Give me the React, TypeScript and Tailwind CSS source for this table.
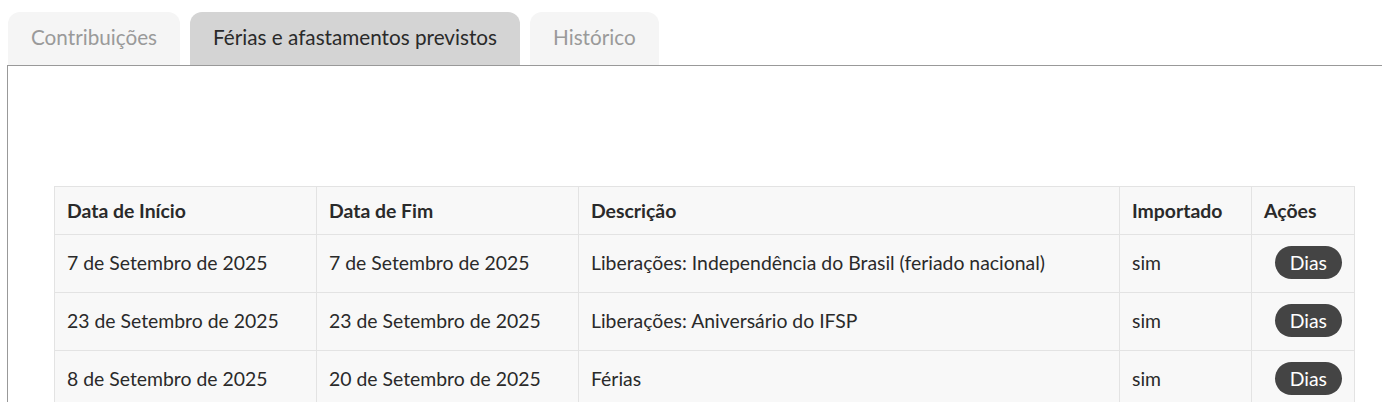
import React from "react";

const ROWS = [
  { inicio: "7 de Setembro de 2025", fim: "7 de Setembro de 2025", desc: "Liberações: Independência do Brasil (feriado nacional)", imp: "sim" },
  { inicio: "23 de Setembro de 2025", fim: "23 de Setembro de 2025", desc: "Liberações: Aniversário do IFSP", imp: "sim" },
  { inicio: "8 de Setembro de 2025", fim: "20 de Setembro de 2025", desc: "Férias", imp: "sim" },
];

const TABS = ["Contribuições", "Férias e afastamentos previstos", "Histórico"];

export default function App() {
  return (
    <div className="bg-white w-[1382px] h-[402px] overflow-hidden font-['Lato',sans-serif] text-[#2a2a2a]">
      <div className="pt-3 pl-2 flex gap-[10px]">
        {TABS.map((t, i) => (
          <div
            key={t}
            className={`h-[53px] px-[23px] pb-[1px] flex items-center rounded-t-[12px] text-[20.7px] ${
              i === 1 ? "bg-[#d4d4d4] text-[#2a2a2a]" : "bg-[#f5f5f5] text-[#9a9a9a]"
            }`}
          >
            {t}
          </div>
        ))}
      </div>
      <div className="ml-[7px] border-t border-l border-[#999] pt-[120px] pl-[46px]">
        <table className="w-[1300px] border-collapse table-fixed text-[19.4px]">
          <colgroup>
            <col className="w-[262px]" />
            <col className="w-[262px]" />
            <col className="w-[541px]" />
            <col className="w-[132px]" />
            <col className="w-[103px]" />
          </colgroup>
          <thead>
            <tr className="h-[48px] bg-[#f8f8f8]">
              {["Data de Início", "Data de Fim", "Descrição", "Importado", "Ações"].map((h) => (
                <th key={h} className="border border-[#e3e3e3] px-3 text-left font-bold">
                  {h}
                </th>
              ))}
            </tr>
          </thead>
          <tbody>
            {ROWS.map((r, i) => (
              <tr key={i} className="h-[58px] bg-[#f8f8f8]">
                <td className="border border-[#e3e3e3] px-3 pb-[2px]">{r.inicio}</td>
                <td className="border border-[#e3e3e3] px-3 pb-[2px]">{r.fim}</td>
                <td className="border border-[#e3e3e3] px-3 pb-[2px]">{r.desc}</td>
                <td className="border border-[#e3e3e3] px-3 pb-[2px]">{r.imp}</td>
                <td className="border border-[#e3e3e3] px-3 pb-[2px] text-right">
                  <span className="inline-block bg-[#444] text-white rounded-full px-[15px] py-[3px] leading-[27px]">
                    Dias
                  </span>
                </td>
              </tr>
            ))}
          </tbody>
        </table>
      </div>
    </div>
  );
}
